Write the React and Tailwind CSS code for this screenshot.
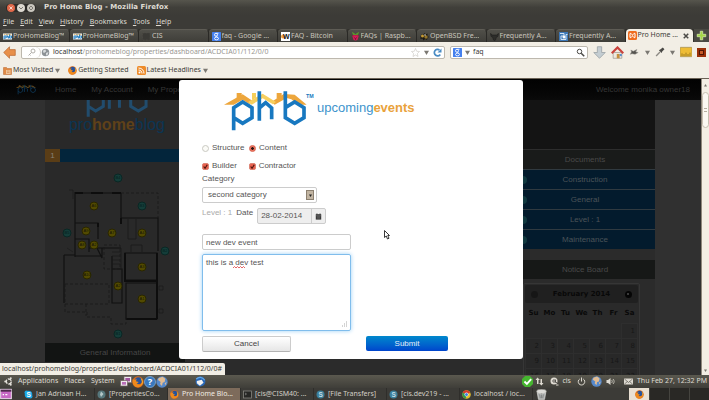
import React from "react";

const ui = "font-['Noto_Sans',sans-serif]";
const site = "font-['Liberation_Sans',Arial,sans-serif]";

function LogoShapes() {
  return (
    <g fill="none" strokeLinejoin="miter">
      <path d="M44 34V15h15v12M164 32V15h15v12" fill="#eda63c" stroke="none" />
      <path d="M90 36V15h12v14z" fill="#f5cf5a" stroke="none" />
      <path d="M6 50L62 19l30 20-10 9-20-13-27 15z" fill="#eda63c" stroke="none" />
      <path d="M148 42l37-24 33 2 36 30h-25l-21-16-14-4-36 20z" fill="#eda63c" stroke="none" />
      <path d="M78 42l44-25 40 25-9 7-31-18-33 19z" fill="#f7cf5f" stroke="none" />
      <path d="M35 127V59l27-17 28 17v30l-28 17-27-17" stroke="#1878c0" strokeWidth="11" />
      <path d="M112 10v88M112 60l19-16 18 16v34" stroke="#1878c0" strokeWidth="11" />
      <path d="M190 10v79l28 17 28-17V59l-28-17-28 17" stroke="#1878c0" strokeWidth="11" />
    </g>
  );
}

function Logo({ className, tm }) {
  return (
    <svg viewBox="0 0 288 135" className={className} aria-label="phb">
      <LogoShapes />
      {tm && (
        <text x="252" y="31" fontSize="16" fontWeight="bold" fill="#1878c0" fontFamily="Liberation Sans, sans-serif">TM</text>
      )}
    </svg>
  );
}

function Icon({ kind, className = "size-[9px]" }) {
  const shapes = {
    phb: (
      <g>
        <rect y="3" width="18" height="12" fill="#eef4f8" />
        <path d="M2 14V8h4v4H2M8 4v8M8 9h3v4M13 4v8h4V8h-4" fill="none" stroke="#1878c0" strokeWidth="1.8" />
        <path d="M1 6l4-2 4 2 3-2 5 2" fill="none" stroke="#eda63c" strokeWidth="1.3" />
      </g>
    ),
    blank: <rect x="1" y="2" width="15" height="14" rx="1" fill="#3a3935" stroke="#55534d" strokeDasharray="2 1" />,
    google: (
      <g>
        <rect width="18" height="18" rx="1" fill="#4580ee" />
        <ellipse cx="8" cy="5.500" rx="3" ry="3" fill="none" stroke="#fff" strokeWidth="1.800" />
        <ellipse cx="9" cy="13" rx="4" ry="2.800" fill="none" stroke="#fff" strokeWidth="1.800" />
        <path d="M9 2.500h4M9 8.500l1.500 2" stroke="#fff" strokeWidth="1.600" />
      </g>
    ),
    bitcoin: (
      <g>
        <rect width="18" height="18" fill="#fff" />
        <circle cx="4" cy="9" r="4" fill="#f0a040" />
        <text x="4" y="14" fontSize="14" fontWeight="bold" fill="#111" fontFamily="Liberation Sans, sans-serif">W</text>
      </g>
    ),
    raspberry: (
      <g>
        <path d="M9 5L3 1l2 5zM9 5l6-4-2 5z" fill="#5aa02c" stroke="#5aa02c" strokeWidth="1.500" />
        <circle cx="6" cy="9" r="3.500" fill="#c01848" />
        <circle cx="12" cy="9" r="3.500" fill="#c01848" />
        <circle cx="9" cy="12" r="5" fill="#d0205a" />
        <path d="M6 11l3 2 3-2M9 13v3" stroke="#50081e" fill="none" />
      </g>
    ),
    puffy: (
      <g>
        <path d="M1 9l3-5 2 2 3-4 2 3 4-2v5l3 2-3 2-1 4-4-2-3 3-2-4-4 1z" fill="#1a1812" />
        <circle cx="5" cy="8" r="3" fill="#c49a35" />
        <circle cx="12" cy="10" r="3.500" fill="#94752c" />
        <circle cx="10" cy="6" r="1.500" fill="#eee" />
      </g>
    ),
    gnu: <path d="M1 3l4 3h8l4-3-1 6-3 1-2 6-2 1-2-1-2-6-3-1z" fill="#2d2d2a" stroke="#1a1a18" />,
    cubes: (
      <g>
        <rect width="18" height="18" fill="#3d78b8" />
        <path d="M2 3h8v5H4v7h10V5h3" fill="none" stroke="#cfe2f2" strokeWidth="2" />
        <circle cx="10" cy="10" r="3" fill="#fff" />
      </g>
    ),
    xampp: (
      <g>
        <rect width="18" height="18" rx="3" fill="#ef6c1f" />
        <path d="M4 5c3-2 3 3 5 3s2-5 5-3v8c-3 2-3-3-5-3s-2 5-5 3z" fill="none" stroke="#fff" strokeWidth="2" />
      </g>
    ),
    globe: (
      <g>
        <circle cx="9" cy="9" r="7.500" fill="#8d9296" />
        <path d="M5 4l4-1 1 4-4 3-2-2zM10 10l5-2-2 6-3 1z" fill="#d9dcde" />
      </g>
    ),
    earth: (
      <g>
        <circle cx="9" cy="9" r="8.500" fill="#5689cb" />
        <path d="M4 3l6-2 4 3-1 5-3 1-1 5-3-3 1-3-4-3zM13 11l3-2-2 5z" fill="#e1bc93" />
      </g>
    ),
    firefox: (
      <g>
        <circle cx="9" cy="9" r="8.500" fill="#df6a16" />
        <circle cx="9.500" cy="7" r="5.300" fill="#25529c" />
        <path d="M1 5l3 1 3-2-1 4 4 1-3 3 5 1 4-4c0 5-4 8-8 8S0 13 1 5z" fill="#ee8a1d" />
        <path d="M13 3c4 3 4 8 1 11 2-4 1-7-1-11z" fill="#f6c335" />
      </g>
    ),
    rss: (
      <g>
        <rect width="18" height="18" rx="3" fill="#ee8b2a" />
        <circle cx="5" cy="13" r="2" fill="#fff" />
        <path d="M3 8c4 0 7 3 7 7M3 4c7 0 11 5 11 11" fill="none" stroke="#fff" strokeWidth="2" />
      </g>
    ),
    folder: (
      <g>
        <path d="M1 3h6l2 2h8v12H1z" fill="#e08a45" stroke="#b9652a" />
        <rect x="6" y="8" width="9" height="8" fill="#f0c397" />
        <path d="M8 10h5M8 13h5" stroke="#c97838" />
      </g>
    ),
    skype: (
      <g>
        <circle cx="9" cy="9" r="7.500" fill="#19a8e6" />
        <circle cx="5" cy="5" r="4" fill="#19a8e6" />
        <circle cx="13" cy="13" r="4" fill="#19a8e6" />
        <text x="5" y="14" fontSize="13" fontWeight="bold" fill="#fff" fontFamily="Liberation Sans, sans-serif">S</text>
      </g>
    ),
    skypeDim: (
      <g>
        <circle cx="9" cy="9" r="8" fill="#3b7f99" />
        <text x="5" y="14" fontSize="13" fontWeight="bold" fill="#c2dce6" fontFamily="Liberation Sans, sans-serif">S</text>
      </g>
    ),
    disc: (
      <g>
        <circle cx="9" cy="9" r="8" fill="#56777c" />
        <path d="M8 3l5 5-5 6-2-5z" fill="#b5c8c8" />
      </g>
    ),
    terminal: (
      <g>
        <rect x="1" y="2" width="16" height="14" fill="#272725" stroke="#8b8a84" strokeWidth="1.500" />
        <path d="M4 6l3 2-3 2" stroke="#bbb" fill="none" />
      </g>
    ),
    chrome: (
      <g>
        <circle cx="9" cy="9" r="8.500" fill="#e2bd2c" />
        <path d="M9 9L1 5a9 9 0 0 1 15.500 0z" fill="#d8392c" />
        <path d="M9 9L1 5c-2 6 1 11 7 12.500z" fill="#33984a" />
        <circle cx="9" cy="9" r="4" fill="#fff" />
        <circle cx="9" cy="9" r="3" fill="#3f7fdc" />
      </g>
    ),
    ubuntu: (
      <g>
        <circle cx="9.500" cy="9" r="5" fill="none" stroke="#e4e1da" strokeWidth="2.800" strokeDasharray="8.500 2" />
        <circle cx="2.500" cy="9" r="2" fill="#e4e1da" />
        <circle cx="13.500" cy="2.700" r="2" fill="#e4e1da" />
        <circle cx="13.500" cy="15.300" r="2" fill="#e4e1da" />
      </g>
    ),
    monitors: (
      <g>
        <rect x="6" y="1" width="11" height="9" fill="#efe9ee" stroke="#766" />
        <rect x="8" y="3" width="7" height="5" fill="#a0559f" />
        <rect x="1" y="7" width="10" height="8" fill="#efe9ee" stroke="#766" />
        <rect x="3" y="9" width="6" height="4" fill="#b96eb8" />
      </g>
    ),
    help: (
      <g>
        <circle cx="9" cy="9" r="8.300" fill="#3978bd" stroke="#8fb9e2" />
        <text x="5.500" y="14" fontSize="14" fontWeight="bold" fill="#fff" fontFamily="Noto Sans, sans-serif">?</text>
      </g>
    ),
    mailbird: (
      <g>
        <circle cx="9" cy="9" r="8" fill="#2866b4" />
        <path d="M3 8l8-2 3 5-6 5-5-4z" fill="#f2f2f2" />
        <path d="M2 5c4-4 10-4 14 2" stroke="#65a7e5" strokeWidth="2" fill="none" />
      </g>
    ),
    desktop: (
      <g>
        <rect x="1" y="2" width="16" height="14" fill="#c868c6" stroke="#f0dff0" strokeWidth="1.500" />
        <path d="M1 4h16" stroke="#4f2a4e" strokeWidth="3" />
        <path d="M4 10h2M8 10h3" stroke="#fff" strokeWidth="2" />
      </g>
    ),
    check: (
      <g>
        <path d="M5 0h8l5 5v8l-5 5H5l-5-5V5z" fill="#45b52f" />
        <path d="M4 9l4 4 7-8" stroke="#fff" strokeWidth="3" fill="none" />
      </g>
    ),
    updown: <path d="M5 1L1 6h3v8h3V6h3zM13 17l4-5h-3V4h-3v8H8z" fill="#dfdbd2" />,
    keyboard: (
      <g>
        <circle cx="8" cy="8" r="7" fill="#dfdbd2" />
        <circle cx="8" cy="8" r="2.500" fill="none" stroke="#3c3b37" strokeWidth="1.500" />
        <path d="M11 5v6h3M13 15h4" stroke="#3c3b37" strokeWidth="1.500" fill="none" />
        <path d="M12 16h5" stroke="#dfdbd2" strokeWidth="2" />
      </g>
    ),
    power: (
      <g fill="none" stroke="#dfdbd2" strokeWidth="2">
        <path d="M5.500 4a6.500 6.500 0 1 0 7 0M9 1v8" />
      </g>
    ),
    sound: (
      <g>
        <path d="M1 6h3l5-4v14l-5-4H1z" fill="#dfdbd2" />
        <path d="M11 6c2 2 2 4 0 6M14 4c3 3 3 7 0 10" fill="none" stroke="#dfdbd2" strokeWidth="1.500" />
      </g>
    ),
    envelope: (
      <g>
        <rect y="3" width="18" height="12" fill="#dfdbd2" />
        <path d="M1 4l8 7 8-7M1 14l6-5M17 14l-6-5" fill="none" stroke="#55534c" strokeWidth="1.300" />
      </g>
    ),
    trash: (
      <g>
        <ellipse cx="9" cy="4" rx="8" ry="3.500" fill="#dddcd8" stroke="#8e8d88" />
        <path d="M2 6l2 11h10l2-11-7 2z" fill="#aeb1b0" stroke="#e3e3e0" />
        <path d="M6 9l1 6M9 9v6M12 9l-1 6" stroke="#6c706f" />
      </g>
    ),
    back: <path d="M1 9L9 1v4h8v8H9v4z" fill="#e8904a" stroke="#b86a35" />,
    key: (
      <g fill="none" stroke="#a9a6a0" strokeWidth="1.800">
        <circle cx="12" cy="6" r="4" />
        <path d="M9 9l-6 6M5 13l2 2" />
      </g>
    ),
    star: <path d="M9 1l2.400 5.500L17 7l-4.200 4L14 17l-5-3-5 3 1.200-6L1 7l5.600-.5z" fill="#fff" stroke="#c8c5c0" strokeWidth="1.200" />,
    reload: (
      <g>
        <path d="M14.500 13A6.500 6.500 0 1 1 13 4" fill="none" stroke="#4a8cc4" strokeWidth="3.500" />
        <path d="M17 1v8H9z" fill="#4a8cc4" />
      </g>
    ),
    search: (
      <g fill="none" stroke="#4b4a47">
        <circle cx="7" cy="7" r="4.500" strokeWidth="2" />
        <path d="M10.500 10.500l6 6" strokeWidth="3" />
      </g>
    ),
    download: <path d="M6 1h6v8h5l-8 8-8-8h5z" fill="#c4cdd2" stroke="#929b9f" />,
    home: (
      <g>
        <path d="M3 9h12v8H3z" fill="#efe9df" stroke="#9a968f" />
        <rect x="8" y="11" width="4" height="6" fill="#c68f3d" />
        <rect x="12" y="11" width="3" height="3" fill="#5a8fca" />
        <path d="M1 10l8-8 8 8" fill="none" stroke="#c9423c" strokeWidth="3" />
      </g>
    ),
    insect: <path d="M3 5l4 2 6-3-2 4 4 1-5 3-5-1-3 1 2-4z" fill="#55534f" stroke="#99968f" strokeWidth=".8" />,
    dropper: (
      <g>
        <path d="M2 16l7-7" stroke="#8d8a84" strokeWidth="2.500" />
        <path d="M7 6l5 5 1-3 4-4-3-3-4 3z" fill="#4a4946" />
      </g>
    ),
    ruler: (
      <g>
        <rect x="0" y="2" width="18" height="14" rx="1" fill="#eebc35" stroke="#9c8a55" />
        <path d="M3 15v-4M6 15v-3M9 15v-5M12 15v-3M15 15v-5" stroke="#7b5e14" />
      </g>
    ),
    redbox: (
      <g>
        <rect width="18" height="18" fill="#9b3009" />
        <rect x="5" y="5" width="8" height="8" fill="#c65a28" stroke="#501503" strokeWidth="2" />
      </g>
    ),
    plus: <path d="M7 2h4v5h5v4h-5v5H7v-5H2V7h5z" fill="#a4d644" stroke="#d8efae" strokeWidth="1.200" />,
    calendar: (
      <g>
        <path d="M2 3h14v14H2z" fill="#3b3b3b" />
        <path d="M2 7h14M5 10h8M5 13h8" stroke="#a5a5a5" strokeWidth=".8" />
        <path d="M5 1v4M13 1v4" stroke="#3b3b3b" strokeWidth="2" />
      </g>
    ),
  };
  return (
    <svg viewBox="0 0 18 18" className={`${className} shrink-0`} aria-hidden="true">
      {shapes[kind]}
    </svg>
  );
}

function Caret({ className = "size-[5px] text-[#7b7872]" }) {
  return (
    <svg viewBox="0 0 6 6" className={`shrink-0 ${className}`} aria-hidden="true">
      <path d="M0 1h6L3 6z" fill="currentColor" />
    </svg>
  );
}

const tabs = [
  ["phb", "ProHomeBlog™"],
  ["phb", "ProHomeBlog™"],
  ["blank", "CIS"],
  ["google", "faq - Google ..."],
  ["bitcoin", "FAQ - Bitcoin"],
  ["raspberry", "FAQs | Raspb..."],
  ["puffy", "OpenBSD Fre..."],
  ["gnu", "Frequently A..."],
  ["cubes", "Frequently A..."],
];

function TitleBar() {
  return (
    <header className="flex h-[15px] shrink-0 items-center gap-2 bg-linear-to-b from-[#56554d] via-[#403f3a] to-[#3c3b37] pl-[6px]">
      <div className="flex items-center gap-[2px] rounded-full bg-[#2c2b28] px-px">
        <button aria-label="Close" className="grid size-2 place-items-center rounded-full bg-[#e2694a]">
          <svg viewBox="0 0 8 8" className="size-2"><path d="M2.500 2.500l3 3M5.500 2.500l-3 3" stroke="#f7d5c8" /></svg>
        </button>
        <button aria-label="Minimize" className="grid size-2 place-items-center rounded-full bg-[#dcd8cf]">
          <svg viewBox="0 0 8 8" className="size-2"><path d="M2 3l2 2 2-2" stroke="#7d7a73" fill="none" /></svg>
        </button>
        <button aria-label="Maximize" className="grid size-2 place-items-center rounded-full bg-[#c9c6bd]">
          <svg viewBox="0 0 8 8" className="size-2"><path d="M2 4l2-2 2 2-2 2z" stroke="#7d7a73" fill="none" /></svg>
        </button>
      </div>
      <h1 className="text-[7px] font-bold text-[#dfdbd2] font-['DejaVu_Sans',sans-serif]">Pro Home Blog - Mozilla Firefox</h1>
    </header>
  );
}

function MenuBar() {
  return (
    <nav className="flex h-[14px] shrink-0 items-center gap-[6px] bg-[#3c3b37] pl-[3px] text-[7px] text-[#dfdbd2]">
      {["File", "Edit", "View", "History", "Bookmarks", "Tools", "Help"].map((m) => (
        <button key={m}><span className="underline">{m[0]}</span>{m.slice(1)}</button>
      ))}
    </nav>
  );
}

function TabStrip() {
  return (
    <div className="flex h-[13px] shrink-0 bg-[#33322e] text-[7px]">
      {tabs.map(([icon, label], i) => (
        <button key={i} className="flex min-w-0 flex-1 items-center gap-px rounded-t-sm border-r border-[#2a2926] border-t border-t-[#5e5c55] bg-linear-to-b from-[#504f49] to-[#3f3e39] pl-[3px] text-[#c9c5bc]">
          <Icon kind={icon} />
          <span className="truncate">{label}</span>
        </button>
      ))}
      <button className="flex min-w-0 flex-1 items-center gap-px rounded-t-sm bg-[#f2eee5] pl-[2px] text-[#3c3b37]">
        <Icon kind="xampp" />
        <span className="flex-1 text-left whitespace-nowrap">Pro Home ...</span>
        <svg viewBox="0 0 8 8" className="mr-1 size-[6px]"><path d="M1 1l6 6M7 1L1 7" stroke="#4b4a46" strokeWidth="2" /></svg>
      </button>
      <button aria-label="New tab" className="ml-px grid w-[15px] place-items-center bg-[#4a4943]">
        <Icon kind="plus" className="size-[11px]" />
      </button>
    </div>
  );
}

function ToolBar() {
  return (
    <div className="flex h-[20px] shrink-0 items-center bg-[#f2eee5] pr-[3px] pl-[3px] text-[7px] text-[#3c3b37]">
      <button aria-label="Back" className="mr-[5px]"><Icon kind="back" className="size-[13px]" /></button>
      <div className="flex h-[13px] min-w-0 flex-1 items-center rounded-xs border border-[#bdb8ae] bg-white">
        <span className="flex h-full w-[19px] items-center justify-center rounded-r-md border-r border-[#d5d1c9]"><Icon kind="key" /></span>
        <Icon kind="globe" />
        <div className="ml-[3px] min-w-0 flex-1 whitespace-nowrap text-[#9a9792]"><span className="text-[#33322f]">localhost</span>/prohomeblog/properties/dashboard/ACDCIA01/112/0/0</div>
        <div className="flex items-center gap-1 pr-[2px]">
          <Icon kind="star" />
          <Caret />
          <button aria-label="Reload"><Icon kind="reload" /></button>
        </div>
      </div>
      <label className="ml-[5px] flex h-[13px] w-[138px] items-center gap-[3px] rounded-xs border border-[#bdb8ae] bg-white px-[2px]">
        <Icon kind="google" />
        <Caret />
        <input aria-label="Search" defaultValue="faq" className="min-w-0 flex-1 text-[7px] outline-none" />
        <Icon kind="search" />
      </label>
      <div className="flex items-center gap-[5px] pl-[5px]">
        <button aria-label="Downloads"><Icon kind="download" className="size-[13px]" /></button>
        <button aria-label="Home"><Icon kind="home" className="size-[13px]" /></button>
        <Icon kind="insect" className="size-[11px]" />
        <Caret />
        <Icon kind="dropper" className="size-[10px]" />
        <Caret />
        <Icon kind="ruler" className="size-[12px]" />
        <Icon kind="redbox" className="size-[9px]" />
      </div>
    </div>
  );
}

function Bookmarks() {
  return (
    <div className="flex h-[17px] shrink-0 items-center gap-2 border-b border-[#6b6256] bg-[#f2eee5] pl-[3px] text-[7px] text-[#3c3b37]">
      <button className="flex items-center gap-px"><Icon kind="folder" />Most Visited<Caret className="ml-px size-[5px] text-[#7b7872]" /></button>
      <a href="#start" className="flex items-center gap-px"><Icon kind="firefox" />Getting Started</a>
      <button className="flex items-center gap-px"><Icon kind="rss" />Latest Headlines<Caret className="ml-px size-[5px] text-[#7b7872]" /></button>
    </div>
  );
}

const rooms = [
  [94, 206, "A6"], [86, 231, "A9"], [112, 233, "A7"], [142, 233, "A4"], [82, 245, "A8"],
  [94, 245, "A2"], [142, 267, "A3"], [87, 275, "A10"], [118, 286, "A2"], [142, 299, "A1"],
];
const outside = [[118, 178, "B4"], [142, 206, "B3"], [67, 233, "B5"], [165, 251, "B2"], [118, 334, "B1"]];

function FloorPlan() {
  return (
    <svg viewBox="45 162 140 181" className="block h-[181px] w-full" aria-label="Floor plan">
      <g fill="none" stroke="#111" strokeWidth="1.200">
        <path d="M75 192v65M75 193h46M121 193v25M121 218h37v33M75 223h23v16M75 239h14v13M75 256h27M89 248h32" />
        <path d="M64 255v48M64 255h11M125 253h32v27h-32zM126 283h31v36h-31zM112 256v47h10v-34h-10" />
        <path d="M131 252v-7h11v7M128 219v20h8v-20M121 248v22" stroke="#1a1a1a" strokeWidth=".8" />
        <path d="M97 248l5 10v-10" />
      </g>
      <path d="M75 193h8M91 193h12M112 193h9M121 218v6M126 319h31M157 253v66M125 253v28h32M98 223v4" fill="none" stroke="#0d0d0d" strokeWidth="2" />
      <g fill="none" stroke="#1b1b1b" strokeWidth=".8" strokeDasharray="3 2">
        <path d="M121 193h37v25M65 284h44v20H65zM65 304v8h22v5h24v7h15v-7M104 245h16v24h-16zM86 304v12" />
      </g>
      <g fill="none" stroke="#1b1b1b" strokeWidth=".7">
        <path d="M69 190h4v9M112 252h8M112 256h8M112 260h8M112 264h8M159 286h4v4h-4zM159 309h4v4h-4zM67 248l6 4" />
      </g>
      {rooms.map(([x, y, t]) => (
        <g key={`${x}-${y}`}>
          <circle cx={x} cy={y} r="4" fill="#524a00" stroke="#292600" />
          <text x={x} y={y + 1} fontSize="4" textAnchor="middle" fill="#15140a" fontFamily="Liberation Sans, sans-serif">{t}</text>
        </g>
      ))}
      {outside.map(([x, y, t]) => (
        <g key={`${x}-${y}`}>
          <circle cx={x} cy={y} r="4" fill="#143d39" stroke="#0a2724" />
          <text x={x} y={y + 1} fontSize="4" textAnchor="middle" fill="#061c19" fontFamily="Liberation Sans, sans-serif">{t}</text>
        </g>
      ))}
    </svg>
  );
}

const weeks = [
  ["", "", "", "", "", "", "1"],
  ["2", "3", "4", "5", "6", "7", "8"],
  ["9", "10", "11", "12", "13", "14", "15"],
  ["16", "17", "18", "19", "20", "21", "22"],
];

function NoticeCalendar() {
  return (
    <div className="mt-1 mr-[15px] ml-[8px] rounded-xs border border-[#363636] bg-[#2a2a2a] p-px font-['DejaVu_Sans',sans-serif]">
      <div className="flex h-[18px] items-center justify-between rounded-xs bg-[#202020] px-[6px] text-[7px] font-bold text-[#080808]">
        <span className="size-[7px] rounded-full bg-[#161616]" />
        February 2014
        <span className="grid size-[7px] place-items-center rounded-full bg-[#050505]"><span className="size-[2px] bg-[#3a3a3a]" /></span>
      </div>
      <table className="w-full table-fixed text-center text-[7px] leading-[10px]">
        <thead>
          <tr className="h-[20px] text-[#090909]">
            {["Su", "Mo", "Tu", "We", "Th", "Fr", "Sa"].map((d) => <th key={d}>{d}</th>)}
          </tr>
        </thead>
        <tbody>
          {weeks.map((w, i) => (
            <tr key={i} className="h-[15px] text-[#171717]">
              {w.map((d, j) => (
                <td key={j} className={d ? "border border-[#2e2e2e] bg-[#282828] pr-[2px] text-right" : ""}>{d}</td>
              ))}
            </tr>
          ))}
        </tbody>
      </table>
    </div>
  );
}

function SitePage() {
  return (
    <div className={`flex h-full min-w-0 flex-1 flex-col bg-[#303030] text-[8px] ${site}`}>
      <nav className="flex h-[21px] shrink-0 items-center gap-[15px] bg-linear-to-b from-[#020202] to-[#0a0a0a] pr-[11px] pl-[14px] text-[#363636]">
        <Logo className="h-[11px] w-[26px] opacity-40" />
        <a href="#home">Home</a>
        <a href="#account">My Account</a>
        <a href="#properties">My Properties</a>
        <span className="flex-1 text-right">Welcome monika owner18</span>
      </nav>
      <div className="flex min-h-0 flex-1">
        <section className="ml-[45px] w-[140px] bg-[#292929] text-center">
          <div className="flex h-[49px] flex-col items-center overflow-hidden pl-1">
            <svg viewBox="25 66 230 62" className="h-[17px] w-[64px] shrink-0 opacity-45"><LogoShapes /></svg>
            <div className="text-base leading-[16px] text-[#0c3553]">pro<b className="text-[#5f4119]">home</b>blog</div>
          </div>
          <div className="flex h-[13px] items-stretch bg-[#03253b]">
            <span className="w-[15px] bg-[#5a3d16] leading-[13px] text-[#88807a]">1</span>
          </div>
          <FloorPlan />
          <h2 className="bg-[#121413] leading-[19px] text-[#464646]">General Information</h2>
          <div className="h-full bg-[#2e2e2e]" />
        </section>
        <div className="flex-1 bg-[#2b2b2b]" />
        <section className="mr-[46px] w-[140px] bg-[#2b2b2b] text-center text-[#494949]">
          <div className="h-[49px] bg-[#141414]" />
          <h2 className="border-t border-[#2d2d2d] bg-[#191b1a] leading-[19px]">Documents</h2>
          {["Construction", "General", "Level : 1", "Maintenance"].map((d) => (
            <a key={d} href="#doc" className="flex items-center border-t border-[#303a40] bg-[#031b2d] text-[#4b5358]">
              <span className="ml-1 size-2 rounded-full bg-[#11393f]" />
              <span className="flex-1 pr-3 leading-[19px]">{d}</span>
            </a>
          ))}
          <h2 className="mt-[11px] bg-[#161817] leading-[19px]">Notice Board</h2>
          <NoticeCalendar />
        </section>
      </div>
    </div>
  );
}

function ScrollBar() {
  return (
    <div className="flex w-[8px] shrink-0 flex-col items-center border-l border-[#8f887c] bg-[#f3eee4]">
      <span className="flex h-[13px] items-center"><Caret className="size-[3px] rotate-180 text-[#77736b]" /></span>
      <div className="grid h-[36px] w-full place-items-center rounded-full border border-[#c7bfb1] bg-[#fbf8f2]">
        <span className="h-[4px] w-[3px] border-y border-[#b5ad9f]" />
      </div>
      <span className="flex-1" />
      <span className="flex h-[10px] items-center"><Caret className="size-[3px] text-[#77736b]" /></span>
    </div>
  );
}

function Choice({ type, name, label, checked }) {
  const skin = type === "radio"
    ? "rounded-full border-[#c9c9c2] bg-[#fbfbf7] checked:border-[#d9604b] checked:bg-[radial-gradient(circle,#2b1512_30%,#ec7461_45%)]"
    : "rounded-xs border-[#dd8576] bg-[#e8604e]";
  return (
    <label className="relative flex w-[47px] items-center gap-[3px]">
      <input type={type} name={name} defaultChecked={checked} className={`size-[7px] appearance-none border ${skin}`} />
      {type === "checkbox" && (
        <svg viewBox="0 0 8 8" className="pointer-events-none absolute left-0 size-[7px]"><path d="M2 4l1.500 2L6 2" fill="none" stroke="#4a150d" strokeWidth="1.300" /></svg>
      )}
      {label}
    </label>
  );
}

function EventDialog() {
  return (
    <form role="dialog" aria-label="upcoming events" onSubmit={(e) => e.preventDefault()} className={`relative w-[344px] rounded-[3px] bg-white px-[23px] pt-[8px] pb-[7px] text-[8px] leading-[10px] text-[#555] ${site}`}>
      <div className="ml-[20px] flex items-center">
        <Logo tm className="h-[45px] w-[96px]" />
        <h2 className="-ml-px pb-[5px] text-[13px] text-[#3d93cc]">upcoming<b className="text-[#e9a23b]">events</b></h2>
      </div>
      <div className="mt-[10px] flex">
        <Choice type="radio" name="kind" label="Structure" />
        <Choice type="radio" name="kind" label="Content" checked />
      </div>
      <div className="mt-2 flex">
        <Choice type="checkbox" name="builder" label="Builder" checked />
        <Choice type="checkbox" name="contractor" label="Contractor" checked />
      </div>
      <label htmlFor="category" className="mt-[3px] block">Category</label>
      <div className="relative mt-[3px] w-[115px]">
        <select id="category" className="block h-[16px] w-full appearance-none rounded-xs border border-[#ccc] bg-white pl-[5px] text-[8px] leading-[12px]">
          <option>second category</option>
        </select>
        <span className="pointer-events-none absolute top-[3px] right-[3px] grid h-[10px] w-[8px] place-items-center border border-[#8c8070] bg-[#c2b5a2]"><Caret className="size-[3px] text-[#222]" /></span>
      </div>
      <div className="mt-[5px] flex gap-1">
        <span className="text-[#aaa]">Level : 1</span>
        <label htmlFor="date">Date</label>
        <div className="flex h-[16px] w-[69px] rounded-xs border border-[#ccc] bg-[#eee]">
          <input id="date" readOnly defaultValue="28-02-2014" className="w-0 flex-1 pl-[3px] text-[8px] outline-none" />
          <button type="button" aria-label="Pick date" className="grid w-[14px] place-items-center border-l border-[#ccc]"><Icon kind="calendar" className="size-[7px]" /></button>
        </div>
      </div>
      <input aria-label="Title" defaultValue="new dev event" className="mt-[10px] block h-[16px] w-[149px] rounded-xs border border-[#ccc] px-[3px] text-[8px] outline-none" />
      <div className="relative mt-1 w-[149px]">
        <textarea aria-label="Description" spellCheck={false} defaultValue="this is a dev test" className="block h-[77px] w-full resize-none rounded-xs border border-[#80bdec] px-[3px] py-[3px] text-[8px] leading-[10px] shadow-[0_0_4px_#9bd0f5] outline-none" />
        <svg viewBox="0 0 12 3" className="pointer-events-none absolute top-[12px] left-[31px] h-[3px] w-[12px]"><path d="M0 2l1.500-1.500L3 2l1.500-1.500L6 2l1.500-1.500L9 2l1.500-1.500L12 2" fill="none" stroke="#e04040" strokeWidth=".8" /></svg>
        <svg viewBox="0 0 6 6" className="pointer-events-none absolute right-1 bottom-1 size-[6px]"><path d="M1 5h1M3 5h1M5 5h1M3 3h1M5 3h1M5 1h1" stroke="#aaa" /></svg>
      </div>
      <div className="mt-[5px] flex items-start gap-[75px]">
        <button type="button" className="h-[16px] w-[89px] rounded-xs border border-[#ccc] border-b-[#b3b3b3] bg-linear-to-b from-white to-[#e6e6e6] text-[#444]">Cancel</button>
        <button type="submit" className="h-[15px] w-[82px] rounded-xs bg-linear-to-b from-[#0088cc] to-[#0044cc] text-[#e4eefa]">Submit</button>
      </div>
      <svg viewBox="0 0 12 20" className="pointer-events-none absolute top-[150px] left-[205px] h-[10px] w-[6px]"><path d="M1 1v14l3.500-3 2.500 6 3-1.500-2.500-5.500H11z" fill="#fff" stroke="#222" strokeWidth="1.800" /></svg>
    </form>
  );
}

function Panel() {
  return (
    <div className="flex h-[13px] shrink-0 items-center bg-linear-to-b from-[#5b594f] to-[#3f3e39] pr-[2px] pl-1 text-[7px] text-[#dfdbd2]">
      <Icon kind="ubuntu" />
      <nav className="flex gap-[6px] pl-[5px]">
        <button>Applications</button>
        <button>Places</button>
        <button>System</button>
      </nav>
      <div className="flex pl-[5px]">
        <Icon kind="monitors" className="size-[12px]" />
        <Icon kind="firefox" className="size-[12px]" />
        <Icon kind="help" className="size-[12px]" />
        <Icon kind="earth" className="size-[12px]" />
      </div>
      <Icon kind="mailbird" className="ml-[27px] size-[11px]" />
      <div className="flex flex-1 items-center justify-end">
        <Icon kind="check" className="size-[11px]" />
        <Icon kind="updown" className="ml-[2px] size-[9px]" />
        <Icon kind="keyboard" className="ml-[6px] size-[9px]" />
        <span className="ml-[3px]">cis</span>
        <Icon kind="power" className="ml-[6px] size-[9px]" />
        <Icon kind="earth" className="ml-[5px] size-[11px]" />
        <Icon kind="sound" className="ml-1 size-[9px]" />
        <Icon kind="envelope" className="ml-[9px] size-[9px]" />
        <time className="ml-[4px]">Thu Feb 27, 12:32 PM</time>
      </div>
    </div>
  );
}

const tasks = [
  ["skype", "Jan Adriaan H..."],
  ["disc", "[PropertiesCo..."],
  ["firefox", "Pro Home Blo..."],
  ["terminal", "[cis@CISM40: ..."],
  ["skypeDim", "[File Transfers]"],
  ["skypeDim", "[cis.dev219 - ..."],
  ["chrome", "localhost / loc..."],
];

function TaskBar() {
  return (
    <footer className="flex h-[12px] shrink-0 items-center bg-[#3c3b37] text-[7px] text-[#d3cfc6]">
      <span className="w-[22px]"><Icon kind="desktop" className="size-[12px]" /></span>
      {tasks.map(([icon, label]) => (
        <button key={label} className={`flex h-full w-[73px] items-center gap-[3px] border-r border-[#2f2e2b] pl-[2px] whitespace-nowrap ${label.startsWith("Pro") ? "bg-[#7d6b5b] text-[#f0ebe2]" : ""}`}>
          <Icon kind={icon} />
          {label}
        </button>
      ))}
      <Icon kind="trash" className="ml-[3px] size-[11px]" />
      <div className="flex h-full flex-1 justify-end">
        <button aria-label="Workspace 1" className="grid w-[20px] place-items-center bg-[#e9e0d3]"><Icon kind="firefox" /></button>
        {[2, 3, 4].map((n) => (
          <button key={n} aria-label={`Workspace ${n}`} className="w-[20px] border-l border-[#45443f] bg-[#292825]" />
        ))}
      </div>
    </footer>
  );
}

export default function App() {
  return (
    <div className={`flex h-screen flex-col overflow-hidden bg-[#3c3b37] ${ui}`}>
      <TitleBar />
      <MenuBar />
      <TabStrip />
      <ToolBar />
      <Bookmarks />
      <main className="relative flex min-h-0 flex-1 overflow-hidden">
        <SitePage />
        <ScrollBar />
        <div className="absolute inset-0 flex items-start justify-center pt-px pr-[7px]">
          <EventDialog />
        </div>
        <div className="absolute bottom-0 left-0 rounded-tr-xs bg-[#f2eee5] pr-[3px] pl-[2px] text-[7px] leading-[12px] text-[#3c3b37]">localhost/prohomeblog/properties/dashboard/ACDCIA01/112/0/0#</div>
      </main>
      <Panel />
      <TaskBar />
    </div>
  );
}
